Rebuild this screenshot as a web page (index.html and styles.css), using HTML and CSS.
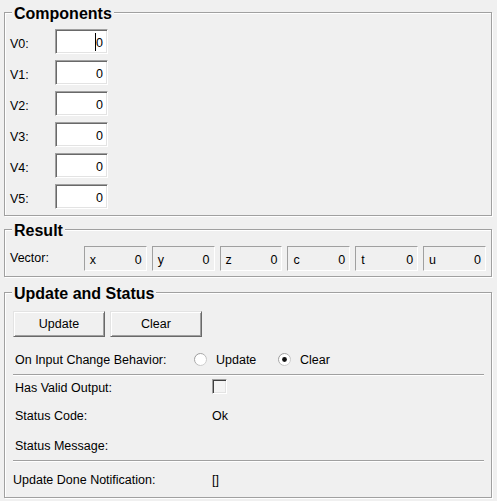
FILE: index.html
```html
<!DOCTYPE html>
<html>
<head>
<meta charset="utf-8">
<link rel="stylesheet" href="styles.css">
</head>
<body>
<fieldset class="group comps">
  <legend>Components</legend>
  <div class="vgrid">
    <span class="lbl">V0:</span><div class="field"><span class="caret"></span>0</div>
    <span class="lbl">V1:</span><div class="field">0</div>
    <span class="lbl">V2:</span><div class="field">0</div>
    <span class="lbl">V3:</span><div class="field">0</div>
    <span class="lbl">V4:</span><div class="field">0</div>
    <span class="lbl">V5:</span><div class="field">0</div>
  </div>
</fieldset>

<fieldset class="group res">
  <legend>Result</legend>
  <div class="vecrow">
    <span class="veclbl">Vector:</span>
    <div class="vbox"><span>x</span><span>0</span></div>
    <div class="vbox"><span>y</span><span>0</span></div>
    <div class="vbox"><span>z</span><span>0</span></div>
    <div class="vbox"><span>c</span><span>0</span></div>
    <div class="vbox"><span>t</span><span>0</span></div>
    <div class="vbox"><span>u</span><span>0</span></div>
  </div>
</fieldset>

<fieldset class="group upd">
  <legend>Update and Status</legend>
  <div class="btns">
    <button class="btn">Update</button>
    <button class="btn">Clear</button>
  </div>
  <div class="row r-radio">
    <span class="rlbl">On Input Change Behavior:</span>
    <span class="radio first">
      <svg width="13" height="13" viewBox="0 0 13 13"><defs><linearGradient id="rg" x1="0" y1="0" x2="1" y2="1"><stop offset="0" stop-color="#8c8c8c"/><stop offset="1" stop-color="#dcdcdc"/></linearGradient></defs><circle cx="6.5" cy="6.5" r="6" fill="#fff" stroke="url(#rg)" stroke-width="1"/></svg>
      <span>Update</span>
    </span>
    <span class="radio">
      <svg width="13" height="13" viewBox="0 0 13 13"><circle cx="6.5" cy="6.5" r="6" fill="#fff" stroke="url(#rg)" stroke-width="1"/><circle cx="6.5" cy="6.5" r="2.4" fill="#111"/></svg>
      <span>Clear</span>
    </span>
  </div>
  <div class="sep s1"></div>
  <div class="row r-valid">
    <span class="slbl">Has Valid Output:</span>
    <span class="chk"></span>
  </div>
  <div class="row r-code">
    <span class="slbl">Status Code:</span>
    <span>Ok</span>
  </div>
  <div class="row r-msg">
    <span class="slbl">Status Message:</span>
    <span></span>
  </div>
  <div class="sep s2"></div>
  <div class="row r-done">
    <span class="slbl nopad">Update Done Notification:</span>
    <span>[]</span>
  </div>
</fieldset>
</body>
</html>
```

FILE: styles.css
```css
html, body {
  margin: 0;
  background: #f0f0f0;
}
body {
  padding-top: 2px;
  width: 497px;
  height: 501px;
  box-sizing: border-box;
  overflow: hidden;
  font: 12.5px/22px "Liberation Sans", Arial, sans-serif;
  color: #000;
}

.group {
  margin: 0 5px 0 4px;
  border: 1px solid #a0a0a0;
  box-shadow: 1px 1px 0 #fff, inset 1px 1px 0 #fff;
  min-width: 0;
}
.group legend {
  font: bold 16px/18px "Liberation Sans", Arial, sans-serif;
  padding: 3px 2px 0;
  margin-left: 2px;
  background: #f0f0f0;
}

/* Components */
.comps { padding: 6px 5px 6px 5px; }
.vgrid {
  display: grid;
  grid-template-columns: 45px 53px;
  grid-auto-rows: 25px;
  row-gap: 6px;
}
.lbl { padding-top: 7px; line-height: 17px; }
.field {
  height: 25px;
  box-sizing: border-box;
  border: 1px solid;
  border-color: #a0a0a0 #fff #fff #a0a0a0;
  box-shadow: inset 1px 1px 0 #696969, inset -1px -1px 0 #e3e3e3;
  background: #fff;
  display: flex;
  justify-content: flex-end;
  align-items: center;
  padding: 3px 4px 0 0;
}
.caret {
  width: 1px;
  height: 18px;
  background: #000;
  margin-top: -2px;
}

/* Result */
.res { margin-top: 3px; padding: 6px 5px 5px 5px; }
.vecrow { display: flex; align-items: flex-start; height: 25px; }
.veclbl { width: 74px; padding-top: 2px; line-height: 20px; }
.vbox {
  width: 63px;
  height: 25px;
  box-sizing: border-box;
  margin-right: 5px;
  border: 1px solid;
  border-color: #a0a0a0 #fff #fff #a0a0a0;
  display: flex;
  justify-content: space-between;
  align-items: center;
  padding: 2px 4px 0 5px;
  line-height: 20px;
}
.vbox:last-child { margin-right: 0; }

/* Update and Status */
.upd { margin-top: 5px; padding: 8px 7px 6px 8px; }
.upd legend { margin-left: -1px; }
.btns { display: flex; gap: 5px; }
.btn {
  width: 92px;
  height: 26px;
  box-sizing: border-box;
  border: 1px solid;
  border-color: #e3e3e3 #696969 #696969 #e3e3e3;
  box-shadow: inset 1px 1px 0 #fff, inset -1px -1px 0 #a0a0a0;
  background: #f0f0f0;
  font: 12.5px/22px "Liberation Sans", Arial, sans-serif;
  color: #000;
  padding: 0;
}
.row {
  display: flex;
  height: 22px;
  align-items: center;
}
.r-radio { margin-top: 12px; }
.rlbl { width: 181px; padding-left: 2px; box-sizing: border-box; }
.radio {
  display: inline-flex;
  align-items: center;
  gap: 9px;
}
.radio svg { display: block; margin-top: -1px; }
.radio.first { width: 84px; }

.sep {
  border-top: 1px solid #a0a0a0;
  border-bottom: 1px solid #fff;
}
.s1 { margin-top: 3px; }
.s2 { margin-top: 3px; }

.slbl { width: 199px; padding-left: 2px; box-sizing: border-box; flex: none; }
.slbl.nopad { padding-left: 0; }
.r-valid { margin-top: 1px; }
.r-code { margin-top: 6px; }
.r-msg { margin-top: 8px; }
.r-done { margin-top: 7px; }

.chk {
  width: 15px;
  height: 15px;
  box-sizing: border-box;
  border: 1px solid;
  border-color: #a0a0a0 #fff #fff #a0a0a0;
  box-shadow: inset 1px 1px 0 #404040, inset -1px -1px 0 #e3e3e3;
  background: #f4f4f4;
  margin-top: -3px;
}
```
